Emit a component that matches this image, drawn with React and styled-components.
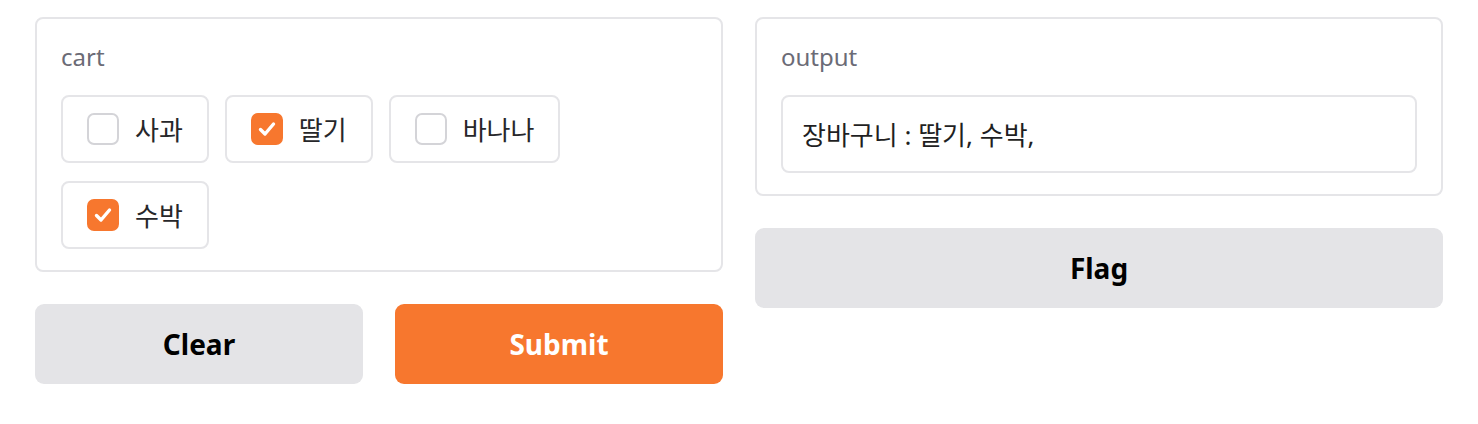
import React, { useState } from 'react';
import styled, { createGlobalStyle } from 'styled-components';

const GlobalStyle = createGlobalStyle`
  body {
    margin: 0;
    background: #fff;
    font-family: "Noto Sans", "Noto Sans CJK KR", sans-serif;
  }
`;

const FRUITS = ['사과', '딸기', '바나나', '수박'];

function App() {
  const [cart, setCart] = useState(['딸기', '수박']);

  const toggle = (name) => {
    setCart((prev) =>
      prev.includes(name) ? prev.filter((n) => n !== name) : [...prev, name]
    );
  };

  const output =
    '장바구니 : ' +
    FRUITS.filter((f) => cart.includes(f))
      .map((f) => f + ',')
      .join(' ');

  return (
    <>
      <GlobalStyle />
      <Page>
        <Column>
          <Panel>
            <Label>cart</Label>
            <Options>
              {FRUITS.map((name) => {
                const checked = cart.includes(name);
                return (
                  <Option key={name} onClick={() => toggle(name)}>
                    <Box $checked={checked}>
                      {checked && (
                        <svg width="28" height="28" viewBox="0 0 28 28">
                          <path
                            d="M7.5 14.5 L12 19 L20.5 9"
                            fill="none"
                            stroke="#fff"
                            strokeWidth="3.4"
                            strokeLinecap="round"
                            strokeLinejoin="round"
                          />
                        </svg>
                      )}
                    </Box>
                    <OptionText>{name}</OptionText>
                  </Option>
                );
              })}
            </Options>
          </Panel>
          <ButtonRow>
            <Button onClick={() => setCart([])}>Clear</Button>
            <Button $primary>Submit</Button>
          </ButtonRow>
        </Column>
        <Column>
          <Panel>
            <Label>output</Label>
            <OutputBox>{output}</OutputBox>
          </Panel>
          <Button>Flag</Button>
        </Column>
      </Page>
    </>
  );
}

const Page = styled.div`
  display: flex;
  gap: 32px;
  padding: 17px 35px;
  align-items: flex-start;
`;

const Column = styled.div`
  flex: 1;
  display: flex;
  flex-direction: column;
  gap: 32px;
  min-width: 0;
`;

const Panel = styled.div`
  border: 2px solid #e5e5e8;
  border-radius: 8px;
  padding: 24px 24px 21px;
`;

const Label = styled.div`
  font-size: 24px;
  line-height: 28px;
  color: #6b6b76;
  margin-bottom: 24px;
`;

const Options = styled.div`
  display: flex;
  flex-wrap: wrap;
  gap: 18px 16px;
`;

const Option = styled.label`
  display: flex;
  align-items: center;
  gap: 16px;
  height: 68px;
  box-sizing: border-box;
  padding: 0 24px;
  border: 2px solid #e5e5e8;
  border-radius: 8px;
  cursor: pointer;
`;

const Box = styled.span`
  width: 32px;
  height: 32px;
  box-sizing: border-box;
  border-radius: 7px;
  display: flex;
  align-items: center;
  justify-content: center;
  background: ${(p) => (p.$checked ? '#f7772e' : '#fff')};
  border: 2px solid ${(p) => (p.$checked ? '#f7772e' : '#d4d4d8')};
`;

const OptionText = styled.span`
  font-size: 26px;
  color: #27272a;
`;

const OutputBox = styled.div`
  height: 78px;
  box-sizing: border-box;
  border: 2px solid #e5e5e8;
  border-radius: 8px;
  padding: 0 19px;
  display: flex;
  align-items: center;
  font-size: 26px;
  color: #1f1f23;
`;

const ButtonRow = styled.div`
  display: flex;
  gap: 32px;
`;

const Button = styled.button`
  flex: 1 1 0;
  height: 80px;
  min-height: 80px;
  border: none;
  border-radius: 9px;
  font-family: "Noto Sans", sans-serif;
  font-size: 28px;
  font-weight: 700;
  background: ${(p) => (p.$primary ? '#f7772e' : '#e4e4e7')};
  color: ${(p) => (p.$primary ? '#fff' : '#000')};
  cursor: pointer;
`;

export default App;
